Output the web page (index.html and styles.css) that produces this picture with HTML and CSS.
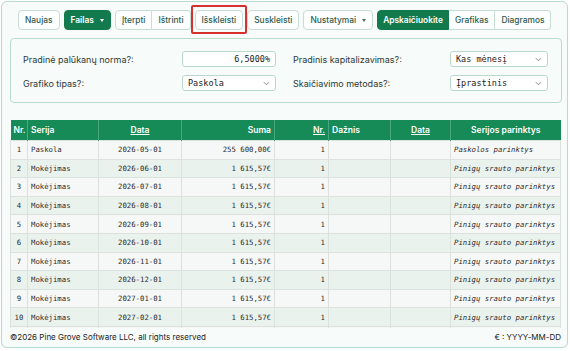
FILE: index.html
```html
<!DOCTYPE html>
<html lang="lt">
<head>
<meta charset="utf-8">
<title>Paskolos grafikas</title>
<link rel="stylesheet" href="styles.css">
</head>
<body>
<div class="card">
  <div class="toolbar">
    <button class="btn">Naujas</button>
    <button class="btn btn-green">Failas <span class="caret"></span></button>
    <div class="group">
      <button class="btn">Įterpti</button>
      <button class="btn">Ištrinti</button>
    </div>
    <button class="btn btn-marked">Išskleisti</button>
    <button class="btn">Suskleisti</button>
    <button class="btn btn-settings">Nustatymai <span class="caret dark"></span></button>
    <div class="group">
      <button class="btn btn-green btn-calc">Apskaičiuokite</button>
      <button class="btn">Grafikas</button>
      <button class="btn">Diagramos</button>
    </div>
  </div>

  <div class="panel">
    <div class="label">Pradinė palūkanų norma?:</div>
    <div class="control input">6,5000%</div>
    <div class="label right">Pradinis kapitalizavimas?:</div>
    <div class="control select"><span>Kas mėnesį</span><svg class="chev" viewBox="0 0 8 5" width="7" height="5"><path d="M1 1 L4 4 L7 1" fill="none" stroke="#777" stroke-width="1"/></svg></div>
    <div class="label">Grafiko tipas?:</div>
    <div class="control select"><span>Paskola</span><svg class="chev" viewBox="0 0 8 5" width="7" height="5"><path d="M1 1 L4 4 L7 1" fill="none" stroke="#777" stroke-width="1"/></svg></div>
    <div class="label right">Skaičiavimo metodas?:</div>
    <div class="control select"><span>Įprastinis</span><svg class="chev" viewBox="0 0 8 5" width="7" height="5"><path d="M1 1 L4 4 L7 1" fill="none" stroke="#777" stroke-width="1"/></svg></div>
  </div>

  <div class="tablewrap">
    <table class="grid">
      <colgroup>
        <col class="c1"><col class="c2"><col class="c3"><col class="c4"><col class="c5"><col class="c6"><col class="c7"><col class="c8">
      </colgroup>
      <thead>
        <tr>
          <th class="l">Nr.</th>
          <th class="l">Serija</th>
          <th class="c"><u>Data</u></th>
          <th class="r">Suma</th>
          <th class="r"><u>Nr.</u></th>
          <th class="l">Dažnis</th>
          <th class="c"><u>Data</u></th>
          <th class="c">Serijos parinktys</th>
        </tr>
      </thead>
      <tbody>
        <tr><td class="c">1</td><td>Paskola</td><td class="c">2026-05-01</td><td class="r">255 600,00€</td><td class="r">1</td><td></td><td></td><td class="i">Paskolos parinktys</td></tr>
        <tr><td class="c">2</td><td>Mokėjimas</td><td class="c">2026-06-01</td><td class="r">1 615,57€</td><td class="r">1</td><td></td><td></td><td class="i">Pinigų srauto parinktys</td></tr>
        <tr><td class="c">3</td><td>Mokėjimas</td><td class="c">2026-07-01</td><td class="r">1 615,57€</td><td class="r">1</td><td></td><td></td><td class="i">Pinigų srauto parinktys</td></tr>
        <tr><td class="c">4</td><td>Mokėjimas</td><td class="c">2026-08-01</td><td class="r">1 615,57€</td><td class="r">1</td><td></td><td></td><td class="i">Pinigų srauto parinktys</td></tr>
        <tr><td class="c">5</td><td>Mokėjimas</td><td class="c">2026-09-01</td><td class="r">1 615,57€</td><td class="r">1</td><td></td><td></td><td class="i">Pinigų srauto parinktys</td></tr>
        <tr><td class="c">6</td><td>Mokėjimas</td><td class="c">2026-10-01</td><td class="r">1 615,57€</td><td class="r">1</td><td></td><td></td><td class="i">Pinigų srauto parinktys</td></tr>
        <tr><td class="c">7</td><td>Mokėjimas</td><td class="c">2026-11-01</td><td class="r">1 615,57€</td><td class="r">1</td><td></td><td></td><td class="i">Pinigų srauto parinktys</td></tr>
        <tr><td class="c">8</td><td>Mokėjimas</td><td class="c">2026-12-01</td><td class="r">1 615,57€</td><td class="r">1</td><td></td><td></td><td class="i">Pinigų srauto parinktys</td></tr>
        <tr><td class="c">9</td><td>Mokėjimas</td><td class="c">2027-01-01</td><td class="r">1 615,57€</td><td class="r">1</td><td></td><td></td><td class="i">Pinigų srauto parinktys</td></tr>
        <tr><td class="c">10</td><td>Mokėjimas</td><td class="c">2027-02-01</td><td class="r">1 615,57€</td><td class="r">1</td><td></td><td></td><td class="i">Pinigų srauto parinktys</td></tr>
        <tr><td></td><td></td><td></td><td></td><td></td><td></td><td></td><td></td></tr>
      </tbody>
    </table>
  </div>

  <div class="footer">
    <span>©2026 Pine Grove Software LLC, all rights reserved</span>
    <span>€ : YYYY-MM-DD</span>
  </div>
</div>
</body>
</html>
```

FILE: styles.css
```css
html, body {
  margin: 0;
  padding: 0;
  background: #ffffff;
}
body {
  font-family: Inter, "Noto Sans", "DejaVu Sans", sans-serif;
  color: #2b3a35;
}
.card {
  box-sizing: border-box;
  width: 567px;
  height: 347px;
  margin: 1px 0 0 1px;
  border: 1px solid #b7dccd;
  border-radius: 6px;
  background: #f7fbfa;
  padding: 8px 5px 0 8px;
  display: flex;
  flex-direction: column;
  box-shadow: 0 1px 2px rgba(0, 80, 50, 0.08);
}
.toolbar {
  display: flex;
  align-items: center;
  gap: 4px;
  padding-left: 8px;
  height: 20px;
  flex-shrink: 0;
}
.btn {
  box-sizing: border-box;
  height: 20px;
  padding: 0 6px;
  border: 1px solid #c8ddd4;
  border-radius: 4px;
  background: #fdfefe;
  color: #2d5a4d;
  font-family: Inter, "Noto Sans", sans-serif;
  font-size: 8.4px;
  font-weight: 500;
  display: inline-flex;
  align-items: center;
  gap: 6px;
  white-space: nowrap;
}
.btn-green {
  background: #137a4e;
  border-color: #137a4e;
  color: #ffffff;
  font-weight: 600;
}
.btn-calc {
  padding: 0 5px;
}
.caret {
  width: 0;
  height: 0;
  border-left: 2.5px solid transparent;
  border-right: 2.5px solid transparent;
  border-top: 3px solid #ffffff;
}
.caret.dark {
  border-top-color: #4d6a60;
}
.group {
  display: flex;
}
.group .btn {
  border-radius: 0;
}
.group .btn + .btn {
  border-left: 0;
}
.group .btn:first-child {
  border-radius: 4px 0 0 4px;
}
.group .btn:last-child {
  border-radius: 0 4px 4px 0;
}
.btn-marked {
  position: relative;
}
.btn-marked::after {
  content: "";
  position: absolute;
  left: -5px;
  right: -5px;
  top: -6px;
  bottom: -5px;
  border: 2px solid #d8302f;
  border-radius: 2px;
}
.panel {
  box-sizing: border-box;
  margin-top: 8px;
  height: 65px;
  flex-shrink: 0;
  border: 1px solid #b7dccd;
  border-radius: 4px;
  background: #f7fbfa;
  padding: 12px 13px 0 12px;
  display: grid;
  grid-template-columns: 159px 94px 1fr 98px;
  row-gap: 8px;
  grid-auto-rows: 16px;
  align-items: center;
}
.label {
  font-size: 9px;
  color: #2b3a35;
}
.label.right {
  padding-left: 17px;
}
.control {
  box-sizing: border-box;
  height: 16px;
  border: 1px solid #b9d7cb;
  border-radius: 3px;
  background: #ffffff;
  font-family: "DejaVu Sans Mono", "Liberation Mono", monospace;
  font-size: 8.5px;
  color: #222;
  display: flex;
  align-items: center;
  padding: 0 5px;
}
.input {
  justify-content: flex-end;
}
.select {
  justify-content: space-between;
}
.chev {
  display: block;
}
.tablewrap {
  margin-top: 17px;
  height: 208px;
  flex-shrink: 0;
  overflow: hidden;
}
.grid {
  width: 550px;
  table-layout: fixed;
  border-collapse: collapse;
}
.c1 { width: 17px; }
.c2 { width: 71px; }
.c3 { width: 83px; }
.c4 { width: 93px; }
.c5 { width: 54px; }
.c6 { width: 62px; }
.c7 { width: 60px; }
.c8 { width: 110px; }
.grid th {
  height: 20px;
  padding: 0 3px;
  background: #168a57;
  color: #ffffff;
  font-size: 8.5px;
  font-weight: 600;
  border-left: 1px solid #4aa67c;
  white-space: nowrap;
}
.grid th:first-child {
  border-left: 0;
}
.grid td {
  height: 18.6px;
  box-sizing: border-box;
  padding: 0 3px;
  border: 1px solid #dbe2de;
  font-family: "DejaVu Sans Mono", "Liberation Mono", monospace;
  font-size: 7.3px;
  color: #2a2a2a;
  white-space: nowrap;
  overflow: hidden;
}
.grid tbody tr:nth-child(odd) td {
  background: #f6f8f7;
}
.grid tbody tr:nth-child(even) td {
  background: #eaf2ee;
}
.l { text-align: left; }
.c { text-align: center; }
.r { text-align: right; }
.i { font-style: italic; text-align: left; }
.footer {
  display: flex;
  justify-content: space-between;
  align-items: center;
  height: 18px;
  flex-shrink: 0;
  font-size: 8px;
  color: #222;
  padding-right: 1px;
}
```
